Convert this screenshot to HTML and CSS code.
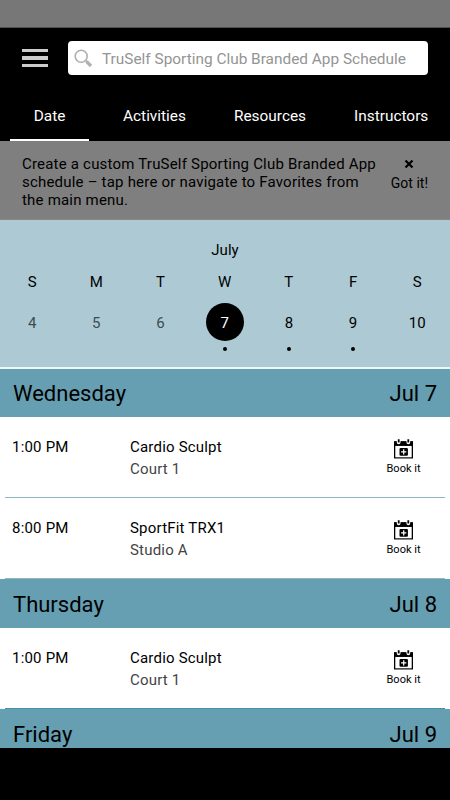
FILE: index.html
```html
<!DOCTYPE html>
<html lang="en">

<head>
  <meta charset="UTF-8" />
  <meta name="viewport" content="width=device-width, initial-scale=1.0" />
  <title>TruSelf Sporting Club Schedule</title>
  <link rel="stylesheet" href="styles.css">
</head>

<body>
  <svg class="sprite">
    <symbol id="book" viewBox="0 0 18 19">
      <path d="M0 2h18v16.5H0z" fill="#000" />
      <path d="M1.2 6.6h15.6v10.8H1.2z" fill="#fff" />
      <path d="M2.6 0v3.2a1.7 1.7 0 0 0 3.6 0V0zM11.8 0v3.2a1.7 1.7 0 0 0 3.6 0V0z" fill="#fff" />
      <path d="M3.6 .3h1.7v3.1H3.6zM12.7 .3h1.7v3.1h-1.7z" fill="#000" />
      <rect x="5.2" y="8.5" width="8" height="7.4" rx="1" fill="#000" />
      <path d="M9.2 9.7v5M6.7 12.2h5" stroke="#fff" stroke-width="1.2" />
    </symbol>
  </svg>

  <div class="statusbar"></div>

  <header>
    <div class="topbar">
      <div class="menu"><span></span><span></span><span></span></div>
      <div class="search">
        <svg class="search-icon" width="19" height="19" viewBox="0 0 19 19" fill="none" stroke="#b0b0b0">
          <circle cx="7.2" cy="7.2" r="6" stroke-width="1.6" />
          <path d="M11.3 11.3l2 2" stroke-width="1.5" />
          <path d="M12.5 12.5l4.5 4.5" stroke-width="3.2" />
        </svg>
        <span class="search-text">TruSelf Sporting Club Branded App Schedule</span>
      </div>
    </div>
    <nav class="tabs">
      <a class="tab active">Date</a>
      <a class="tab">Activities</a>
      <a class="tab">Resources</a>
      <a class="tab">Instructors</a>
    </nav>
  </header>

  <div class="notice">
    <p>Create a custom TruSelf Sporting Club Branded App<br>schedule – tap here or navigate to Favorites from<br>the main menu.</p>
    <div class="dismiss">
      <svg width="10" height="10" viewBox="0 0 10 10"><path d="M1.5 1.5l7 7M8.5 1.5l-7 7" stroke="#000" stroke-width="2.2" /></svg>
      <span>Got it!</span>
    </div>
  </div>

  <section class="calendar">
    <div class="month">July</div>
    <div class="week">
      <span>S</span><span>M</span><span>T</span><span>W</span><span>T</span><span>F</span><span>S</span>
    </div>
    <div class="week days">
      <span class="past">4</span>
      <span class="past">5</span>
      <span class="past">6</span>
      <span class="selected event">7</span>
      <span class="event">8</span>
      <span class="event">9</span>
      <span>10</span>
    </div>
  </section>

  <main>
    <h2 class="first"><span>Wednesday</span><span>Jul 7</span></h2>
    <div class="row">
      <div class="time">1:00 PM</div>
      <div class="info">
        <div>Cardio Sculpt</div>
        <div class="place">Court 1</div>
      </div>
      <div class="book"><svg><use href="#book" /></svg><span>Book it</span></div>
    </div>
    <div class="row">
      <div class="time">8:00 PM</div>
      <div class="info">
        <div>SportFit TRX1</div>
        <div class="place">Studio A</div>
      </div>
      <div class="book"><svg><use href="#book" /></svg><span>Book it</span></div>
    </div>
    <h2><span>Thursday</span><span>Jul 8</span></h2>
    <div class="row last">
      <div class="time">1:00 PM</div>
      <div class="info">
        <div>Cardio Sculpt</div>
        <div class="place">Court 1</div>
      </div>
      <div class="book"><svg><use href="#book" /></svg><span>Book it</span></div>
    </div>
    <h2><span>Friday</span><span>Jul 9</span></h2>
  </main>

  <footer></footer>
</body>

</html>
```

FILE: styles.css
```css
* {
  box-sizing: border-box;
}

body {
  margin: 0;
  width: 450px;
  height: 800px;
  overflow: hidden;
  display: flex;
  flex-direction: column;
  background: #fff;
  color: #000;
  font-family: Roboto, "Liberation Sans", sans-serif;
  font-size: 15px;
}

.sprite {
  display: none;
}

.statusbar {
  height: 28px;
  flex: none;
  background: #777;
  border-bottom: 1px solid #505050;
}

/* Header */
header {
  height: 113px;
  flex: none;
  background: #000;
}

.topbar {
  display: flex;
  align-items: center;
  padding: 13px 22px 0;
}

.menu {
  width: 26px;
  display: flex;
  flex-direction: column;
  gap: 4px;
  margin-right: 20px;
}

.menu span {
  height: 3.4px;
  background: #ccc;
}

.search {
  flex: 1;
  height: 34px;
  display: flex;
  align-items: center;
  padding-left: 6px;
  background: #fff;
  border-radius: 4px;
}

.search-icon {
  margin-right: 9px;
}

.search-text {
  padding-top: 2px;
  color: #949494;
  font-size: 15.4px;
  white-space: nowrap;
}

.tabs {
  height: 66px;
  display: flex;
  gap: 48px;
  padding-left: 10px;
  color: #fff;
  font-size: 15.4px;
}

.tab {
  height: 66px;
  padding-top: 32px;
}

.tab.active {
  width: 79px;
  margin-right: -14px;
  text-align: center;
  border-bottom: 2px solid #fff;
}

/* Favorites hint */
.notice {
  height: 79px;
  flex: none;
  display: flex;
  justify-content: space-between;
  padding: 14px 22px 0;
  background: #7f7f7f;
  border-bottom: 1px solid #8b8483;
}

.notice p {
  margin: 0;
  letter-spacing: .2px;
  line-height: 18px;
  white-space: nowrap;
}

.dismiss {
  display: flex;
  flex-direction: column;
  align-items: center;
  padding-top: 4px;
  gap: 6px;
  font-size: 14px;
}

/* Week calendar */
.calendar {
  height: 147px;
  flex: none;
  background: #adcad4;
  padding-top: 21px;
}

.month {
  text-align: center;
  line-height: 18px;
}

.week {
  display: grid;
  grid-template-columns: repeat(7, 64.2px);
  margin-top: 14px;
  text-align: center;
  line-height: 18px;
}

.days {
  margin-top: 12px;
  line-height: 40px;
}

.past {
  color: #3f4a4e;
}

.selected {
  width: 38px;
  height: 38px;
  margin: 0 auto;
  border-radius: 50%;
  background: #000;
  color: #fff;
}

.event::after {
  content: "";
  display: block;
  width: 4px;
  height: 4px;
  margin: 4px auto 0;
  border-radius: 50%;
  background: #000;
}

/* Schedule */
main {
  height: 381px;
  flex: none;
  overflow: hidden;
}

h2 {
  height: 49px;
  margin: 0;
  padding: 0 13px;
  display: flex;
  justify-content: space-between;
  background: #669eb2;
  font-size: 22px;
  font-weight: 400;
  line-height: 51px;
}

h2.first {
  height: 50px;
  border-top: 2px solid #f1f6f8;
  line-height: 50px;
}

.row {
  height: 81px;
  margin: 0 5px;
  padding: 20px 7px 0;
  display: flex;
  border-bottom: 1px solid #8fb7c4;
}

.row.last {
  border-bottom-color: #3f93a8;
}

.time {
  width: 118px;
  letter-spacing: .2px;
  line-height: 21.5px;
}

.info {
  flex: 1;
  letter-spacing: .2px;
  line-height: 21.5px;
}

.place {
  color: #444;
}

.book {
  width: 69px;
  display: flex;
  flex-direction: column;
  align-items: center;
  font-size: 11px;
  line-height: 13px;
}

.book svg {
  width: 19px;
  height: 20px;
  margin: 2px 0 3px;
}

footer {
  flex: 1;
  background: #000;
}
```
